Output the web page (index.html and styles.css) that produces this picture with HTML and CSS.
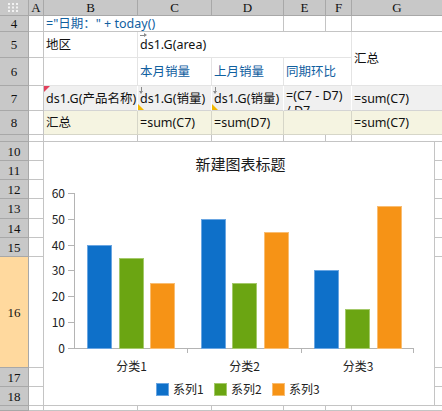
FILE: index.html
```html
<!DOCTYPE html>
<html lang="zh">
<head>
<meta charset="utf-8">
<title>报表设计</title>
<link rel="stylesheet" href="styles.css">
</head>
<body>
<div class="sheet">
  <!-- column headers -->
  <div class="c hd corner">
    <svg width="12" height="9" viewBox="0 0 12 9" class="dots">
      <rect x="0" y="0" width="2" height="2"/><rect x="4" y="0" width="2" height="2"/><rect x="8" y="0" width="2" height="2"/>
      <rect x="0" y="3.5" width="2" height="2"/><rect x="4" y="3.5" width="2" height="2"/><rect x="8" y="3.5" width="2" height="2"/>
      <rect x="0" y="7" width="2" height="2"/><rect x="4" y="7" width="2" height="2"/><rect x="8" y="7" width="2" height="2"/>
    </svg>
  </div>
  <div class="c hd">A</div>
  <div class="c hd">B</div>
  <div class="c hd">C</div>
  <div class="c hd">D</div>
  <div class="c hd">E</div>
  <div class="c hd">F</div>
  <div class="c hd noright">G</div>

  <!-- row 4 -->
  <div class="c rh">4</div>
  <div class="c"></div>
  <div class="c s3 blue">="日期：" + today()</div>
  <div class="c"></div>
  <div class="c"></div>
  <div class="c noright"></div>

  <!-- row 5 -->
  <div class="c rh">5</div>
  <div class="c"></div>
  <div class="c lite">地区</div>
  <div class="c s4 lite"><span class="mark arrow-r"></span>ds1.G(area)</div>
  <div class="c r2 lite noright">汇总</div>

  <!-- row 6 -->
  <div class="c rh">6</div>
  <div class="c"></div>
  <div class="c lite"></div>
  <div class="c lite blue">本月销量</div>
  <div class="c lite blue">上月销量</div>
  <div class="c s2 lite blue">同期环比</div>

  <!-- row 7 -->
  <div class="c rh">7</div>
  <div class="c"></div>
  <div class="c gray"><span class="mark flag"></span>ds1.G(产品名称)</div>
  <div class="c gray"><span class="mark arrow-d"></span><span class="mark corner-y"></span>ds1.G(销量)</div>
  <div class="c gray"><span class="mark arrow-d"></span><span class="mark corner-y"></span>ds1.G(销量)</div>
  <div class="c s2 gray wrap">=(C7 - D7) /&nbsp;D7</div>
  <div class="c gray noright">=sum(C7)</div>

  <!-- row 8 -->
  <div class="c rh">8</div>
  <div class="c"></div>
  <div class="c cream">汇总</div>
  <div class="c cream">=sum(C7)</div>
  <div class="c cream">=sum(D7)</div>
  <div class="c s2 cream"></div>
  <div class="c cream noright">=sum(C7)</div>

  <!-- row 9 (collapsed) -->
  <div class="c rh"></div>
  <div class="c"></div>
  <div class="c"></div>
  <div class="c"></div>
  <div class="c"></div>
  <div class="c"></div>
  <div class="c"></div>
  <div class="c noright"></div>

  <!-- chart block over B10:G18 -->
  <div class="chartwrap">
    <div class="chart">
      <svg width="390" height="263" viewBox="0 0 390 263" class="plot">
        <text x="196.5" y="28" class="title" text-anchor="middle">新建图表标题</text>

        <g class="axis">
          <line x1="30.5" y1="51" x2="30.5" y2="206"/>
          <line x1="24" y1="51.5" x2="30" y2="51.5"/>
          <line x1="24" y1="77.5" x2="30" y2="77.5"/>
          <line x1="24" y1="103.5" x2="30" y2="103.5"/>
          <line x1="24" y1="128.5" x2="30" y2="128.5"/>
          <line x1="24" y1="154.5" x2="30" y2="154.5"/>
          <line x1="24" y1="180.5" x2="30" y2="180.5"/>
          <line x1="24" y1="206.5" x2="30" y2="206.5"/>
          <line x1="30" y1="206.5" x2="370" y2="206.5"/>
          <line x1="143.5" y1="206" x2="143.5" y2="211"/>
          <line x1="257.5" y1="206" x2="257.5" y2="211"/>
          <line x1="369.5" y1="206" x2="369.5" y2="211"/>
        </g>

        <g class="ylab" text-anchor="end">
          <text x="21" y="55.5">60</text>
          <text x="21" y="81.5">50</text>
          <text x="21" y="107.5">40</text>
          <text x="21" y="132.5">30</text>
          <text x="21" y="158.5">20</text>
          <text x="21" y="184.5">10</text>
          <text x="21" y="210.5">0</text>
        </g>

        <g class="bars">
          <rect class="b1" x="43.5" y="103.5" width="24" height="102.5"/>
          <rect class="b2" x="75.5" y="116.5" width="24" height="89.5"/>
          <rect class="b3" x="106.5" y="141.5" width="24" height="64.5"/>

          <rect class="b1" x="157.5" y="77.5" width="24" height="128.5"/>
          <rect class="b2" x="188.5" y="141.5" width="24" height="64.5"/>
          <rect class="b3" x="220.5" y="90.5" width="24" height="115.5"/>

          <rect class="b1" x="270.5" y="128.5" width="24" height="77.5"/>
          <rect class="b2" x="301.5" y="167.5" width="24" height="38.5"/>
          <rect class="b3" x="333.5" y="64.5" width="24" height="141.5"/>
        </g>

        <g class="xlab" text-anchor="middle">
          <text x="87.5" y="228.5">分类1</text>
          <text x="200.5" y="228.5">分类2</text>
          <text x="314" y="228.5">分类3</text>
        </g>

        <g class="legend">
          <rect class="b1" x="112.5" y="241.5" width="12" height="12"/>
          <text x="129" y="252">系列1</text>
          <rect class="b2" x="170.5" y="241.5" width="12" height="12"/>
          <text x="187" y="252">系列2</text>
          <rect class="b3" x="228.5" y="241.5" width="12" height="12"/>
          <text x="245" y="252">系列3</text>
        </g>
      </svg>
    </div>
    <div class="strip">
      <div class="sr h19"></div>
      <div class="sr h19"></div>
      <div class="sr h19"></div>
      <div class="sr h20"></div>
      <div class="sr h19"></div>
      <div class="sr h19"></div>
      <div class="sr h111"></div>
      <div class="sr h19"></div>
      <div class="sr h19"></div>
    </div>
  </div>

  <!-- rows 10 - 18: headers and column A -->
  <div class="c rh">10</div><div class="c"></div>
  <div class="c rh">11</div><div class="c"></div>
  <div class="c rh">12</div><div class="c"></div>
  <div class="c rh">13</div><div class="c"></div>
  <div class="c rh">14</div><div class="c"></div>
  <div class="c rh">15</div><div class="c"></div>
  <div class="c rh sel">16</div><div class="c"></div>
  <div class="c rh">17</div><div class="c"></div>
  <div class="c rh">18</div><div class="c"></div>

  <!-- row 19 (partly visible) -->
  <div class="c rh"></div>
  <div class="c"></div>
  <div class="c"></div>
  <div class="c"></div>
  <div class="c"></div>
  <div class="c"></div>
  <div class="c"></div>
  <div class="c noright"></div>
</div>
</body>
</html>
```

FILE: styles.css
```css
* {
  box-sizing: border-box;
  margin: 0;
  padding: 0;
}

html, body {
  width: 442px;
  height: 411px;
  overflow: hidden;
  background: #ffffff;
}

body {
  font-family: "Noto Sans", "Noto Sans CJK SC", sans-serif;
  font-size: 12.5px;
  color: #111111;
}

.sheet {
  display: grid;
  grid-template-columns: 29px 15px 94px 74px 72px 42px 26px 90px;
  grid-template-rows: 16px 16px 26px 28px 25px 24px 7px 19px 19px 19px 20px 19px 19px 111px 19px 19px 5px;
  width: 442px;
  height: 411px;
}

.c {
  position: relative;
  display: flex;
  align-items: center;
  padding-left: 2px;
  border-right: 1px solid #c4c4c4;
  border-bottom: 1px solid #c4c4c4;
  white-space: nowrap;
  overflow: hidden;
  line-height: 15px;
}

.noright {
  border-right: none;
}

.s2 { grid-column: span 2; }
.s3 { grid-column: span 3; }
.s4 { grid-column: span 4; }
.r2 { grid-row: span 2; }

/* headers */
.hd, .rh {
  background: #c8c8c8;
  border-color: #a8a8a8;
  justify-content: center;
  padding: 0;
  font-family: "Liberation Serif", "DejaVu Serif", serif;
  font-size: 13px;
  color: #111111;
}

.rh.sel {
  background: #ffd99e;
}

.corner .dots rect {
  fill: #f2f2f2;
}

/* cell styles */
.blue {
  color: #11609f;
}

.lite {
  border-color: #e4e4e4;
}

.gray {
  background: #f0f0f0;
  border-color: #ffffff;
  border-bottom-color: #d4d4d4;
}

.cream {
  background: #f5f4e1;
  border-color: #d6d6c8;
}

.wrap {
  white-space: normal;
  align-items: flex-start;
  padding-top: 2px;
  line-height: 15px;
}

/* small cell markers */
.mark {
  position: absolute;
  display: block;
}

.arrow-r {
  left: 2px;
  top: 1px;
  width: 7px;
  height: 5px;
  background: linear-gradient(#8a8a8a, #8a8a8a) 0 2px / 5px 1px no-repeat;
}

.arrow-r::after {
  content: "";
  position: absolute;
  right: 0;
  top: 0;
  border-left: 3px solid #8a8a8a;
  border-top: 2.5px solid transparent;
  border-bottom: 2.5px solid transparent;
}

.arrow-d {
  left: 1px;
  top: 1px;
  width: 5px;
  height: 7px;
  background: linear-gradient(#8a8a8a, #8a8a8a) 2px 0 / 1px 5px no-repeat;
}

.arrow-d::after {
  content: "";
  position: absolute;
  left: 0;
  bottom: 0;
  border-top: 3px solid #8a8a8a;
  border-left: 2.5px solid transparent;
  border-right: 2.5px solid transparent;
}

.corner-y {
  left: 0;
  bottom: 0;
  width: 0;
  height: 0;
  border-left: 6px solid #f2b800;
  border-top: 6px solid transparent;
}

.flag {
  left: 0;
  top: 0;
  width: 0;
  height: 0;
  border-top: 6px solid #e2405c;
  border-right: 6px solid transparent;
}

/* chart */
.chartwrap {
  grid-row: 8 / 17;
  grid-column: 3 / 9;
  display: flex;
}

.chart {
  width: 391px;
  height: 264px;
  background: #ffffff;
  border-right: 1px solid #c4c4c4;
  border-bottom: 1px solid #c4c4c4;
}

.plot {
  display: block;
  font-family: "Noto Sans CJK SC", "Noto Sans", sans-serif;
}

.plot .title {
  font-size: 15px;
  fill: #1a1a1a;
}

.plot .axis line {
  stroke: #b4b4b4;
  stroke-width: 1;
  shape-rendering: crispEdges;
}

.plot .ylab,
.plot .xlab,
.plot .legend text {
  font-size: 12px;
  fill: #222222;
}

.plot .b1 {
  fill: #0e70c9;
  stroke: #6aa6e2;
}

.plot .b2 {
  fill: #6ba512;
  stroke: #a4c96a;
}

.plot .b3 {
  fill: #f69316;
  stroke: #f9bd72;
}

.plot rect {
  stroke-width: 1;
  shape-rendering: crispEdges;
}

.strip {
  width: 7px;
  display: flex;
  flex-direction: column;
}

.sr {
  border-bottom: 1px solid #c4c4c4;
}

.h19 { height: 19px; }
.h20 { height: 20px; }
.h111 { height: 111px; }
```
